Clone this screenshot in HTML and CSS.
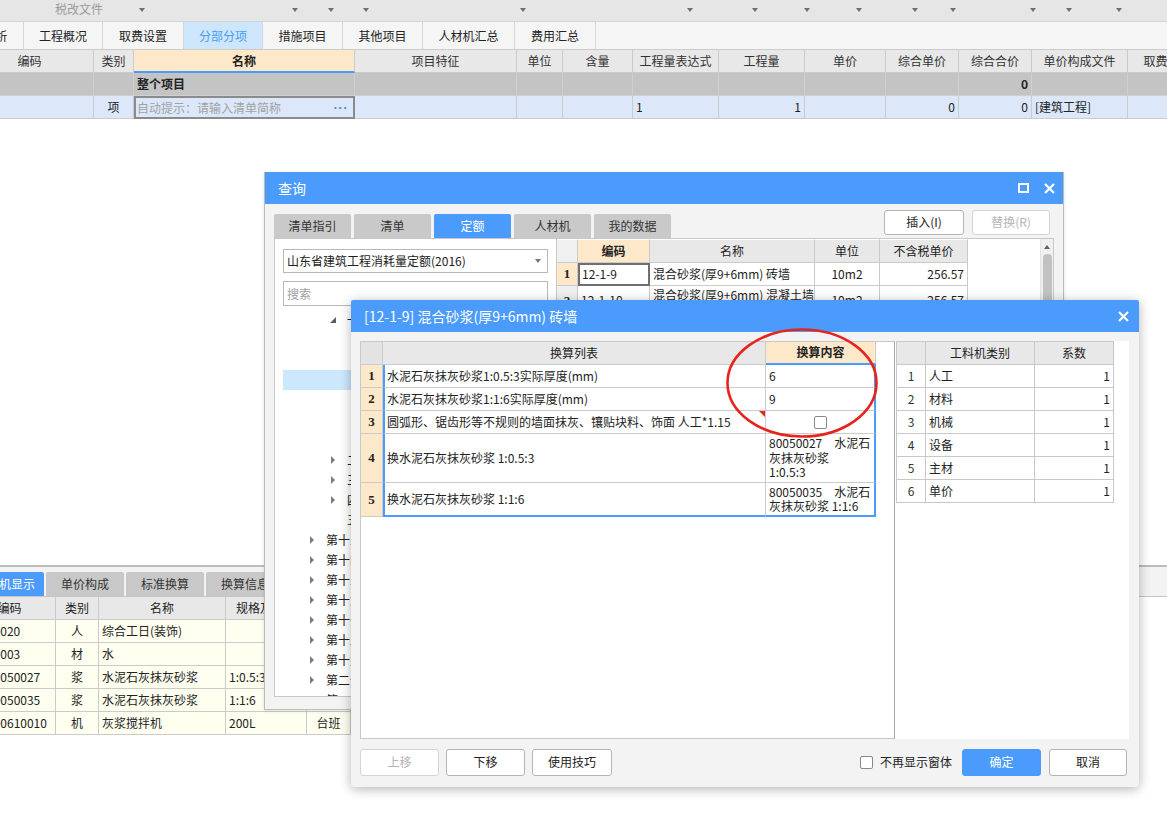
FILE: index.html
```html
<!DOCTYPE html>
<html lang="zh-CN">
<head>
<meta charset="utf-8">
<title>分部分项 - 标准换算</title>
<link rel="stylesheet" href="styles.css">
</head>
<body>
<div class="app">
  <section class="top-pane">
    <div class="toolbar">
      <span></span>
      <span class="tb-label">税改文件</span>
      <span><i class="dd"></i></span>
      <span><i class="dd"></i></span>
      <span><i class="dd"></i></span>
      <span><i class="dd"></i></span>
      <span><i class="dd"></i></span>
      <span><i class="dd"></i></span>
      <span><i class="dd"></i></span>
      <span><i class="dd"></i></span>
      <span><i class="dd"></i></span>
      <span><i class="dd"></i></span>
      <span><i class="dd"></i></span>
      <span><i class="dd"></i></span>
      <span><i class="dd"></i></span>
      <span><i class="dd"></i></span>
    </div>
    <nav class="navtabs">
      <div class="nav lead w80">造价分析</div>
      <div class="nav w79">工程概况</div>
      <div class="nav w81">取费设置</div>
      <div class="nav w79 on">分部分项</div>
      <div class="nav w80">措施项目</div>
      <div class="nav w80">其他项目</div>
      <div class="nav w92">人材机汇总</div>
      <div class="nav w81">费用汇总</div>
    </nav>
    <div class="mgrid">
      <div class="row head">
        <div>编码</div><div>类别</div><div class="sel">名称</div><div>项目特征</div><div>单位</div><div>含量</div><div>工程量表达式</div><div>工程量</div><div>单价</div><div>综合单价</div><div>综合合价</div><div>单价构成文件</div><div>取费专业</div>
      </div>
      <div class="row total">
        <div></div><div></div><div class="b">整个项目</div><div></div><div></div><div></div><div></div><div></div><div></div><div></div><div class="b r">0</div><div></div><div></div>
      </div>
      <div class="row cur">
        <div></div><div class="c">项</div><div class="edit"><span class="ph">自动提示：请输入清单简称</span><span class="more">···</span></div><div></div><div></div><div></div><div>1</div><div class="r">1</div><div></div><div class="r">0</div><div class="r">0</div><div>[建筑工程]</div><div></div>
      </div>
    </div>
  </section>

  <section class="bottom-pane">
    <div class="btabs">
      <div class="btab on">工料机显示</div>
      <div class="btab">单价构成</div>
      <div class="btab">标准换算</div>
      <div class="btab">换算信息</div>
      <div class="btab">特征及内容</div>
    </div>
    <div class="bgrid">
      <div class="row head"><div>编码</div><div>类别</div><div>名称</div><div>规格及型号</div><div>单位</div><div>损耗率</div><div>含量</div><div>数量</div><div>不含税市场价</div><div>含税市场价</div></div>
      <div class="row"><div>00010020</div><div class="c">人</div><div>综合工日(装饰)</div><div></div><div class="c">工日</div><div></div><div></div><div></div><div></div><div></div></div>
      <div class="row"><div>34110003</div><div class="c">材</div><div>水</div><div></div><div class="c">m3</div><div></div><div></div><div></div><div></div><div></div></div>
      <div class="row"><div class="ind">80050027</div><div class="c">浆</div><div>水泥石灰抹灰砂浆</div><div>1:0.5:3</div><div class="c">m3</div><div></div><div></div><div></div><div></div><div></div></div>
      <div class="row"><div class="ind">80050035</div><div class="c">浆</div><div>水泥石灰抹灰砂浆</div><div>1:1:6</div><div class="c">m3</div><div></div><div></div><div></div><div></div><div></div></div>
      <div class="row"><div class="ind">990610010</div><div class="c">机</div><div>灰浆搅拌机</div><div>200L</div><div class="c">台班</div><div></div><div></div><div></div><div></div><div></div></div>
    </div>
  </section>
</div>

<div class="dlg query">
  <div class="dlg-title">
    <span>查询</span>
    <span class="tbtns">
      <svg width="11" height="10" viewBox="0 0 11 10"><rect x="1" y="1" width="9" height="8" fill="none" stroke="#fff" stroke-width="2"/></svg>
      <svg width="11" height="11" viewBox="0 0 11 11"><path d="M1 1L10 10M10 1L1 10" stroke="#fff" stroke-width="2.2"/></svg>
    </span>
  </div>
  <div class="qbody">
    <div class="qbar">
      <div class="qtabs">
        <div class="qtab">清单指引</div>
        <div class="qtab">清单</div>
        <div class="qtab on">定额</div>
        <div class="qtab">人材机</div>
        <div class="qtab">我的数据</div>
      </div>
      <div class="qbtns">
        <div class="btn w80">插入(I)</div>
        <div class="btn dis w78">替换(R)</div>
      </div>
    </div>
    <div class="qpanels">
      <div class="qleft">
        <div class="select"><span>山东省建筑工程消耗量定额(2016)</span><i class="caret"></i></div>
        <div class="search">搜索</div>
        <div class="tree">
          <div class="node l1"><i class="tw exp"></i><span>一</span></div>
          <div class="node l2"><i class="tw"></i></div>
          <div class="node l2"><i class="tw"></i></div>
          <div class="node l2 sel"><i class="tw"></i></div>
          <div class="node l2"><i class="tw"></i></div>
          <div class="node l2"><i class="tw"></i></div>
          <div class="node l2"><i class="tw"></i></div>
          <div class="node l1"><i class="tw col"></i><span>二</span></div>
          <div class="node l1"><i class="tw col"></i><span>三</span></div>
          <div class="node l1"><i class="tw col"></i><span>四</span></div>
          <div class="node l1"><i class="tw"></i><span>五</span></div>
          <div class="node l0"><i class="tw col"></i><span>第十三章</span></div>
          <div class="node l0"><i class="tw col"></i><span>第十四章</span></div>
          <div class="node l0"><i class="tw col"></i><span>第十五章</span></div>
          <div class="node l0"><i class="tw col"></i><span>第十六章</span></div>
          <div class="node l0"><i class="tw col"></i><span>第十七章</span></div>
          <div class="node l0"><i class="tw col"></i><span>第十八章</span></div>
          <div class="node l0"><i class="tw col"></i><span>第十九章</span></div>
          <div class="node l0"><i class="tw col"></i><span>第二十章</span></div>
          <div class="node l0"><i class="tw"></i><span>第二十一章</span></div>
        </div>
      </div>
      <div class="qgrid">
        <div class="qtable">
          <div class="row head"><div class="rn"></div><div class="sel">编码</div><div>名称</div><div>单位</div><div>不含税单价</div></div>
          <div class="row"><div class="rn cur">1</div><div class="focus">12-1-9</div><div>混合砂浆(厚9+6mm) 砖墙</div><div class="c">10m2</div><div class="r">256.57</div></div>
          <div class="row tall"><div class="rn">2</div><div>12-1-10</div><div class="two">混合砂浆(厚9+6mm) 混凝土墙</div><div class="c">10m2</div><div class="r">256.57</div></div>
        </div>
        <div class="vscroll"><i class="up"></i><i class="thumb"></i></div>
      </div>
    </div>
  </div>
</div>

<div class="dlg conv">
  <div class="dlg-title">
    <span>[12-1-9] 混合砂浆(厚9+6mm) 砖墙</span>
    <span class="tbtns">
      <svg width="11" height="11" viewBox="0 0 11 11"><path d="M1 1L10 10M10 1L1 10" stroke="#fff" stroke-width="2.2"/></svg>
    </span>
  </div>
  <div class="cbody">
    <div class="cpanels">
      <div class="cleft">
        <div class="ctable">
          <div class="ch rn"></div><div class="ch">换算列表</div><div class="ch hl">换算内容</div>
          <div class="rn">1</div><div class="cl">水泥石灰抹灰砂浆1:0.5:3实际厚度(mm)</div><div class="cc">6</div>
          <div class="rn">2</div><div class="cl">水泥石灰抹灰砂浆1:1:6实际厚度(mm)</div><div class="cc">9</div>
          <div class="rn">3</div><div class="cl mark">圆弧形、锯齿形等不规则的墙面抹灰、镶贴块料、饰面 人工*1.15</div><div class="cc chk"><i class="cbox"></i></div>
          <div class="rn">4</div><div class="cl">换水泥石灰抹灰砂浆 1:0.5:3</div><div class="cc multi"><span>80050027<i class="sp"></i>水泥石</span><span>灰抹灰砂浆</span><span>1:0.5:3</span></div>
          <div class="rn">5</div><div class="cl last">换水泥石灰抹灰砂浆 1:1:6</div><div class="cc multi last"><span>80050035<i class="sp"></i>水泥石</span><span>灰抹灰砂浆 1:1:6</span></div>
        </div>
      </div>
      <div class="cright">
        <div class="ftable">
          <div class="fh"></div><div class="fh">工料机类别</div><div class="fh">系数</div>
          <div class="fn">1</div><div>人工</div><div class="r">1</div>
          <div class="fn">2</div><div>材料</div><div class="r">1</div>
          <div class="fn">3</div><div>机械</div><div class="r">1</div>
          <div class="fn">4</div><div>设备</div><div class="r">1</div>
          <div class="fn">5</div><div>主材</div><div class="r">1</div>
          <div class="fn">6</div><div>单价</div><div class="r">1</div>
        </div>
      </div>
    </div>
    <div class="cfoot">
      <div class="lbtns">
        <div class="btn dis w79">上移</div>
        <div class="btn w79">下移</div>
        <div class="btn w80">使用技巧</div>
      </div>
      <div class="rgrp">
        <i class="cbox"></i>
        <span class="cb-label">不再显示窗体</span>
        <div class="btn pri w79">确定</div>
        <div class="btn w78 ml8">取消</div>
      </div>
    </div>
  </div>
</div>

<svg class="ring" width="152" height="111" viewBox="0 0 152 111"><ellipse cx="76" cy="55" rx="74.5" ry="53.5" fill="none" stroke="#e8231c" stroke-width="2.6"/></svg>
</body>
</html>
```

FILE: styles.css
```css
* { box-sizing: border-box; margin: 0; padding: 0; }
html, body { width: 1167px; height: 814px; overflow: hidden; background: #fff; }
body {
  position: relative;
  font-family: "Noto Sans CJK SC", "Microsoft YaHei", sans-serif;
  font-size: 12px;
  line-height: 1.2;
  color: #222;
}
i { font-style: normal; }

.app { width: 1167px; height: 814px; overflow: hidden; display: flex; flex-direction: column; }
.top-pane { flex: none; height: 565px; overflow: hidden; }

/* toolbar */
.toolbar {
  height: 22px;
  background: #e6e6e6;
  border-bottom: 1px solid #d3d3d3;
  display: grid;
  grid-template-columns: 55px 87px 153px 36px 35px 157px 167px 65px 52px 52px 56px 38px 80px 36px 50px 1fr;
  align-items: start;
}
.tb-label { color: #9b9b9b; line-height: 18px; }
.dd {
  display: block; width: 0; height: 0; margin: 8px 0 0 -3px;
  border-left: 3.5px solid transparent; border-right: 3.5px solid transparent;
  border-top: 4px solid #707070;
}

/* navigation tabs */
.navtabs { height: 28px; display: flex; background: #f5f5f5; border-bottom: 1px solid #cbcbcb; }
.nav {
  flex: none; height: 27px; line-height: 27px; text-align: center;
  border-right: 1px solid #d6d6d6; color: #222; white-space: nowrap;
}
.nav.lead { margin-left: -56px; }
.nav.on { background: #cde6fb; color: #4a9bf5; }
.w78 { width: 78px; } .w79 { width: 79px; } .w80 { width: 80px; } .w81 { width: 81px; } .w92 { width: 92px; }

/* main grid */
.mgrid {
  display: grid; width: max-content; margin-left: -34px;
  grid-template-columns: 128px 40px 221px 162px 46px 70px 86px 86px 81px 73px 73px 96px 80px;
  grid-auto-rows: 23px;
}
.mgrid .row, .bgrid .row, .qtable .row { display: contents; }
.mgrid .row > div {
  border-right: 1px solid #cbcbcb; border-bottom: 1px solid #cbcbcb;
  padding: 0 3px; line-height: 22px; white-space: nowrap; overflow: hidden;
}
.mgrid .head > div { background: #e8e8e8; text-align: center; color: #333; }
.mgrid .head > .sel { background: #fde8c9; font-weight: 700; color: #222; border-bottom: 2px solid #4a9bfc; line-height: 21px; }
.mgrid .total > div { background: #c4c4c4; border-color: #d0d0d0; }
.mgrid .cur > div { background: #dce8fa; }
.mgrid .cur > .edit {
  border: 2px solid #8b8b8b; display: flex; justify-content: space-between; align-items: center;
  line-height: 18px; padding: 0 5px 0 1px;
}
.ph { color: #a2a2a2; }
.more { color: #3b8de6; font-family: "Liberation Sans", sans-serif; font-weight: 700; font-size: 13px; letter-spacing: 0.5px; }
.b { font-weight: 700; }
.r { text-align: right; }
.c { text-align: center; }

/* bottom pane */
.bottom-pane { flex: none; border-top: 2px solid #bdbdbd; }
.btabs {
  height: 30px; display: flex; align-items: flex-end; gap: 2px;
  background: #f3f3f3; border-bottom: 1px solid #c6c6c6;
}
.btab {
  flex: none; width: 78px; height: 24px; line-height: 24px; text-align: center;
  background: #c8c8c8; color: #333; border-radius: 2px 2px 0 0; white-space: nowrap;
}
.btab.on { margin-left: -34px; background: #4a9bfc; color: #fff; }
.bgrid {
  display: grid; width: max-content; margin-left: -36px;
  grid-template-columns: 92px 43px 127px 81px 44px 60px 70px 70px 80px 80px;
  grid-auto-rows: 23px;
}
.bgrid .row > div {
  border-right: 1px solid #cbcbcb; border-bottom: 1px solid #cbcbcb;
  padding: 0 3px; line-height: 22px; white-space: nowrap; overflow: hidden; background: #fffff0;
}
.bgrid .head > div { background: #e8e8e8; text-align: center; }
.bgrid .row > .ind { padding-left: 23px; }

/* dialogs */
.dlg { position: absolute; background: #f3f3f3; display: flex; flex-direction: column; }
.dlg-title {
  flex: none; height: 32px; background: #4a9bfc; color: #fff; font-size: 14px;
  display: flex; align-items: center; justify-content: space-between;
}
.tbtns { display: flex; align-items: center; gap: 15px; }
.tbtns svg { display: block; }

.query {
  left: 264px; top: 172px; width: 800px; height: 538px;
  border: 1px solid #bcbcbc; border-top: 0; box-shadow: 0 1px 4px rgba(0,0,0,.12);
}
.query .dlg-title { padding: 0 8px 0 13px; }
.qbody { flex: 1; display: flex; flex-direction: column; padding: 6px 9px 12px; }
.qbar { flex: none; height: 28px; display: flex; }
.qtabs { display: flex; gap: 3px; align-self: flex-end; }
.qtab {
  width: 77px; height: 24px; line-height: 24px; text-align: center;
  background: #c9c9c9; color: #333; border-radius: 2px 2px 0 0;
}
.qtab.on { background: #4a9bfc; color: #fff; }
.qbtns { margin-left: auto; margin-right: 4px; display: flex; gap: 8px; align-self: flex-start; }
.btn {
  flex: none; height: 25px; border: 1px solid #b4b4b4; border-radius: 3px; background: #fff;
  display: flex; align-items: center; justify-content: center; color: #222;
}
.btn.dis { color: #b4b4b4; border-color: #d4d4d4; }
.btn.pri { background: #4a9bfc; border-color: #4a9bfc; color: #fff; }

.qpanels { flex: none; height: 459px; display: flex; }
.qleft {
  flex: none; width: 283px; background: #fff; border: 1px solid #c8c8c8;
  padding: 10px 8px 0; overflow: hidden; display: flex; flex-direction: column;
}
.select {
  flex: none; height: 24px; border: 1px solid #b8b8b8;
  display: flex; align-items: center; justify-content: space-between; padding: 0 6px 0 3px;
}
.caret {
  width: 0; height: 0; border-left: 3.5px solid transparent; border-right: 3.5px solid transparent;
  border-top: 4px solid #777;
}
.search { flex: none; margin-top: 8px; height: 25px; border: 1px solid #b8b8b8; color: #a0a0a0; padding: 0 3px; line-height: 23px; }
.tree { margin-top: 4px; }
.node { height: 20px; display: flex; align-items: center; white-space: nowrap; }
.node.l0 { padding-left: 27px; }
.node.l1 { padding-left: 48px; }
.node.l2 { padding-left: 68px; }
.node.sel { background: #cce8ff; }
.tw { width: 16px; height: 20px; flex: none; display: flex; align-items: center; }
.tw.col::before {
  content: ""; border-left: 4.5px solid #7c7c7c;
  border-top: 4px solid transparent; border-bottom: 4px solid transparent;
}
.tw.exp::before {
  content: ""; margin-left: -1px; border-bottom: 6px solid #5e5e5e; border-left: 6px solid transparent;
}

.qgrid {
  flex: 1; margin-left: -1px; background: #fff; border: 1px solid #c8c8c8;
  display: flex; overflow: hidden;
}
.qtable {
  flex: 1; display: grid; align-content: start;
  grid-template-columns: 21px 72px 165px 65px 88px;
  grid-template-rows: 24px 23px 30px;
}
.qtable .row > div {
  border-right: 1px solid #cbcbcb; border-bottom: 1px solid #cbcbcb;
  padding: 0 3px; white-space: nowrap; overflow: hidden;
  display: flex; align-items: center;
}
.qtable .row > .c { justify-content: center; }
.qtable .row > .r { justify-content: flex-end; }
.qtable .head > div { background: #e8e8e8; justify-content: center; border-top: 1px solid #fff; }
.qtable .head > .sel { background: #fde8c9; font-weight: 700; }
.qtable .row > .rn { justify-content: center; background: #f0f0f0; font-family: "Liberation Serif", serif; font-weight: 700; font-size: 13px; padding: 0; }
.qtable .row > .rn.cur { background: #fde8c9; }
.qtable .row > .focus { border: 2px solid #6f6f6f; padding-left: 2px; }
.qtable .row > .two { line-height: 14px; align-items: flex-start; padding-top: 2px; }
.vscroll {
  flex: none; width: 13px; background: #f0f0f0; border-left: 1px solid #e4e4e4;
  display: flex; flex-direction: column; align-items: center;
}
.vscroll .up {
  margin-top: 6px; width: 0; height: 0;
  border-left: 3.5px solid transparent; border-right: 3.5px solid transparent; border-bottom: 4px solid #606060;
}
.vscroll .thumb { margin-top: 5px; width: 9px; height: 200px; border-radius: 4px; background: #c2c2c2; }

/* conversion dialog */
.conv {
  left: 351px; top: 300px; width: 788px; height: 487px;
  border-radius: 2px 2px 4px 4px; box-shadow: 0 2px 12px rgba(0,0,0,.3);
}
.conv .dlg-title { padding: 0 10px 0 13px; border-radius: 2px 2px 0 0; }
.cbody { flex: 1; display: flex; flex-direction: column; padding: 9px 10px 11px 9px; }
.cpanels { flex: none; height: 398px; display: flex; }
.cleft { flex: none; width: 534px; background: #fff; border: 1px solid #c8c8c8; border-right: 0; }
.cright { flex: 1; background: #fff; border-left: 1px solid #a9a9a9; padding-left: 1px; }

.ctable {
  display: grid; grid-template-columns: 22px 383px 110px;
  grid-template-rows: 23px 23px 23px 23px 49px 34px;
}
.ctable > div {
  border-right: 1px solid #cbcbcb; border-bottom: 1px solid #cbcbcb;
  display: flex; align-items: center; padding: 0 3px; white-space: nowrap; position: relative;
}
.ctable > .ch { background: #e8e8e8; justify-content: center; }
.ctable > .ch.hl { background: #fde8c9; font-weight: 700; border-bottom: 2px solid #4a9bfc; }
.ctable > .rn { background: #fde8c9; justify-content: center; font-family: "Liberation Serif", serif; font-weight: 700; font-size: 13px; padding: 0; }
.ctable > .ch.rn { background: #e3e3e3; }
.ctable > .cl { border-left: 2px solid #4a9bfc; padding-left: 2px; }
.ctable > .cc { border-right: 2px solid #4a9bfc; padding-right: 0; }
.ctable > .last { border-bottom: 2px solid #4a9bfc; }
.ctable > .multi { flex-direction: column; align-items: flex-start; justify-content: center; line-height: 14.5px; }
.ctable > .chk { justify-content: center; padding: 0; }
.sp { display: inline-block; width: 12px; }
.mark::after {
  content: ""; position: absolute; top: 0; right: 0;
  border-top: 6px solid #e8231c; border-left: 6px solid transparent;
}
.cbox { display: block; width: 13px; height: 13px; border: 1px solid #8a8a8a; border-radius: 2px; background: #fff; flex: none; }

.ftable {
  display: grid; width: max-content;
  grid-template-columns: 29px 109px 79px;
  grid-template-rows: 23px repeat(6, 23px);
  border-top: 1px solid #c8c8c8; border-left: 1px solid #c8c8c8;
}
.ftable > div {
  border-right: 1px solid #c8c8c8; border-bottom: 1px solid #c8c8c8;
  display: flex; align-items: center; padding: 0 3px; white-space: nowrap;
}
.ftable > .fh { background: #e8e8e8; justify-content: center; }
.ftable > .fn { justify-content: center; color: #333; }
.ftable > .r { justify-content: flex-end; }

.cfoot { flex: none; margin-top: 10px; height: 27px; display: flex; align-items: center; }
.cfoot .btn { height: 27px; }
.lbtns { display: flex; gap: 7px; }
.rgrp { margin-left: auto; margin-right: 2px; display: flex; align-items: center; }
.cb-label { margin-left: 7px; margin-right: 10px; }
.ml8 { margin-left: 8px; }

.ring { position: absolute; left: 726px; top: 328px; }
```
